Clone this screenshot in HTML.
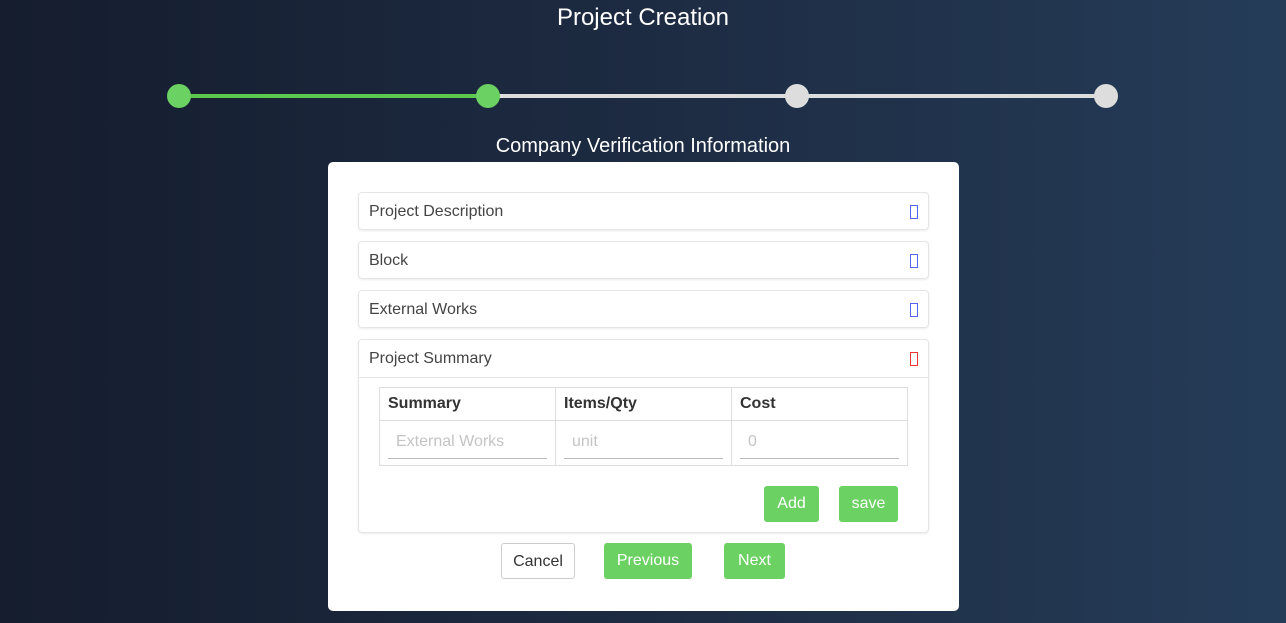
<!DOCTYPE html>
<html><head><meta charset="utf-8"><style>
*{box-sizing:border-box;margin:0;padding:0}
body{width:1286px;height:623px;overflow:hidden;background:linear-gradient(90deg,#151d2e 0%,#1d2b42 50%,#253c58 100%);font-family:"Liberation Sans","DejaVu Sans",sans-serif;position:relative}
.a{position:absolute}
.t{color:#fff;text-align:center;width:100%}
.dot{position:absolute;width:24px;height:24px;border-radius:50%;top:84px}
.card{left:328px;top:162px;width:631px;height:449px;background:#fff;border-radius:5px}
.acc{position:absolute;left:30px;width:571px;height:38px;border:1px solid #e5e5e5;border-radius:4px;box-shadow:0 1px 2px rgba(0,0,0,.08)}
.acc span{position:absolute;left:10px;top:10px;font-size:16px;color:#444}
.ic{position:absolute;right:10px;top:12px;width:8px;height:14px;border:1px solid #5566ee}
.btn{position:absolute;background:#6ad162;color:#fff;font-size:16px;text-align:center;border-radius:3px;height:36px;line-height:36px}
table{border-collapse:collapse;position:absolute;left:51px;top:225px;width:529px}
td,th{border:1px solid #ddd;text-align:left;height:33px;padding:0 8px;font-size:16px;color:#333}
td{height:45px;color:#c4c4c4;vertical-align:top;padding-top:4px}
td div{border-bottom:1px solid #bbb;padding:8px 8px 7px;}
</style></head><body>
<div class="a t" style="top:4px;font-size:24px">Project Creation</div>
<div class="a" style="left:179px;top:94px;width:309px;height:4px;background:#5cc84f"></div>
<div class="a" style="left:488px;top:94px;width:618px;height:4px;background:#ddd"></div>
<div class="dot" style="left:167px;background:#6ad162"></div>
<div class="dot" style="left:476px;background:#6ad162"></div>
<div class="dot" style="left:785px;background:#ddd"></div>
<div class="dot" style="left:1094px;background:#ddd"></div>
<div class="a t" style="top:135px;font-size:20px">Company Verification Information</div>
<div class="a card">
<div class="acc" style="top:30px"><span>Project Description</span><i class="ic"></i></div>
<div class="acc" style="top:79px"><span>Block</span><i class="ic"></i></div>
<div class="acc" style="top:128px"><span>External Works</span><i class="ic"></i></div>
<div class="acc" style="top:177px;height:194px"><span>Project Summary</span><i class="ic" style="border-color:#e33"></i>
<div class="a" style="left:0;right:0;top:37px;border-top:1px solid #e5e5e5"></div></div>
<table><tr><th style="width:176px">Summary</th><th style="width:176px">Items/Qty</th><th>Cost</th></tr>
<tr><td><div>External Works</div></td><td><div>unit</div></td><td><div>0</div></td></tr></table>
<div class="btn" style="left:436px;top:324px;width:55px">Add</div>
<div class="btn" style="left:511px;top:324px;width:59px">save</div>
<div class="btn" style="left:173px;top:381px;width:74px;background:#fff;color:#333;border:1px solid #ccc">Cancel</div>
<div class="btn" style="left:276px;top:381px;width:88px">Previous</div>
<div class="btn" style="left:396px;top:381px;width:61px">Next</div>
</div>
</body></html>
